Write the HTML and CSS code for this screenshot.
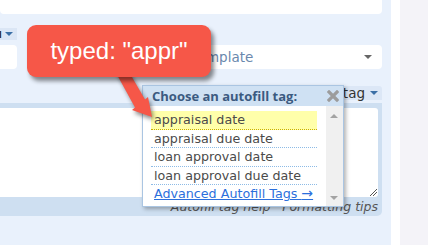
FILE: index.html
```html
<!DOCTYPE html>
<html lang="en">
<head>
  <meta charset="UTF-8" />
  <title>Autofill tag picker</title>
  <link rel="stylesheet" href="styles.css">
</head>
<body>
  <div class="screen">
    <div class="panel">
      <div class="top-field"></div>
      <div class="fields">
        <div class="field">
          <div class="label">Menu <span class="caret"></span></div>
          <div class="input"></div>
        </div>
        <div class="field">
          <div class="label"></div>
          <div class="select">Choose a Template <span class="caret grey"></span></div>
        </div>
      </div>
      <div class="toolbar">
        <span class="tag-btn">Insert autofill tag <span class="caret"></span></span>
      </div>
      <div class="editor">
        <div class="textarea"><span class="grip"></span></div>
        <div class="editor-foot">Autofill tag help · Formatting tips</div>
      </div>
    </div>
    <div class="gutter"></div>
    <div class="sidebar"></div>

    <!-- autofill popup -->
    <div class="popup">
      <div class="popup-head">
        Choose an autofill tag:
        <svg class="close" width="12" height="12" viewBox="0 0 12 12">
          <path d="M2 2 L10 10 M10 2 L2 10" stroke="#9c9c9c" stroke-width="3.2" stroke-linecap="square"/>
        </svg>
      </div>
      <div class="popup-body">
        <ul class="tag-list">
          <li class="active">appraisal date</li>
          <li>appraisal due date</li>
          <li>loan approval date</li>
          <li>loan approval due date</li>
          <li class="more"><a href="#">Advanced Autofill Tags <span class="go">→</span></a></li>
        </ul>
        <div class="scrollbar">
          <span class="arrow up"></span>
          <span class="arrow down"></span>
        </div>
      </div>
    </div>

    <svg class="pointer" width="428" height="245" viewBox="0 0 428 245">
      <polygon points="125,65 145,99.6 148,97 152,117 132,110 135,107.4 115,71" fill="#f65748"/>
    </svg>
    <div class="callout">typed: "appr"</div>
  </div>
</body>
</html>
```

FILE: styles.css
```css
body {
  margin: 0;
  font-family: 'DejaVu Sans', sans-serif;
  color: #444;
}
.screen {
  position: relative;
  display: flex;
  width: 428px;
  height: 245px;
  overflow: hidden;
}
.panel {
  width: 391px;
  padding-right: 9px;
  box-sizing: border-box;
  background-color: #e9f1fc;
}
.gutter {
  width: 9px;
  background-color: #fff;
}
.sidebar {
  flex: 1;
  background-color: #f4f3f8;
}
.top-field {
  height: 14px;
  background-color: #fff;
  border-radius: 0 0 4px 4px;
}
.fields {
  display: grid;
  grid-template-columns: 17px 1fr;
  gap: 12px;
  margin-top: 14px;
}
.label {
  display: flex;
  justify-content: flex-end;
  align-items: center;
  gap: 3px;
  height: 12px;
  padding-right: 4px;
  overflow: hidden;
  white-space: nowrap;
  font-size: 12px;
  font-weight: 600;
  color: #333;
}
.field:first-child .label {
  background-color: #dbe6f5;
}
.input, .select {
  height: 24px;
  margin-top: 5px;
  background-color: #fff;
  border-radius: 0 4px 4px 0;
}
.select {
  display: flex;
  align-items: center;
  justify-content: space-between;
  padding: 0 10px 0 96px;
  border-radius: 4px;
  font-size: 13.5px;
  color: #6a88ad;
}
.caret {
  display: inline-block;
  width: 0;
  height: 0;
  border-left: 4px solid transparent;
  border-right: 4px solid transparent;
  border-top: 4px solid #3b6fa6;
}
.caret.grey {
  border-top-color: #666;
}
.toolbar {
  display: flex;
  justify-content: flex-end;
  margin-top: 17px;
}
.tag-btn {
  display: flex;
  align-items: center;
  gap: 5px;
  height: 14px;
  padding: 0 4px;
  background-color: #dce7f6;
  border-radius: 3px 3px 0 0;
  font-size: 13.5px;
  color: #333;
}
.editor {
  margin-top: 3px;
  padding: 5px 4px 0 0;
  background-color: #cedff1;
  border-radius: 0 0 5px 0;
}
.textarea {
  position: relative;
  height: 89px;
  background-color: #fff;
  border-radius: 0 3px 3px 0;
}
.grip {
  position: absolute;
  right: 1px;
  bottom: 1px;
  width: 7px;
  height: 7px;
  background: linear-gradient(135deg, transparent 45%, #555 45%, #555 52%, transparent 52%, transparent 70%, #555 70%, #555 77%, transparent 77%);
}
.editor-foot {
  height: 19px;
  line-height: 19px;
  text-align: right;
  font-size: 12.5px;
  font-style: italic;
  color: #555;
}

/* popup */
.popup {
  position: absolute;
  left: 142px;
  top: 85px;
  width: 202px;
  height: 122px;
  box-sizing: border-box;
  border: 1px solid #aac5e2;
  background-color: #fff;
  box-shadow: 2px 2px 4px rgba(0, 0, 0, 0.3);
}
.popup-head {
  display: flex;
  justify-content: space-between;
  align-items: center;
  height: 20px;
  padding: 0 4px 0 9px;
  background-color: #cfe1f3;
  font-family: 'Open Sans', sans-serif;
  font-size: 13px;
  font-weight: 700;
  color: #3b5a80;
}
.popup-body {
  display: flex;
  height: 100px;
}
.tag-list {
  flex: 1;
  min-width: 0;
  list-style: none;
  margin: 0;
  padding: 5px 9px 0 8px;
}
.tag-list li {
  height: 17.5px;
  line-height: 17.5px;
  padding-left: 3px;
  border-bottom: 1px dotted #8dbbe6;
  font-size: 12.7px;
  color: #4a4a4a;
  white-space: nowrap;
}
.tag-list li.active {
  background-color: #ffffaa;
  border-bottom-color: #c9b000;
}
.tag-list li.more {
  border-bottom: none;
}
.tag-list a {
  color: #2b6fdc;
}
.go {
  font-size: 14px;
}
.scrollbar {
  position: relative;
  flex-shrink: 0;
  width: 17px;
  background-color: #f0f0f0;
}
.arrow {
  position: absolute;
  left: 4px;
  width: 0;
  height: 0;
  border-left: 4px solid transparent;
  border-right: 4px solid transparent;
}
.arrow.up {
  top: 8px;
  border-bottom: 4px solid #a3a3a3;
}
.arrow.down {
  bottom: 6px;
  border-top: 4px solid #a3a3a3;
}

/* annotation */
.pointer {
  position: absolute;
  left: 0;
  top: 0;
  filter: drop-shadow(2px 3px 2px rgba(0, 0, 0, 0.45));
}
.callout {
  position: absolute;
  left: 27px;
  top: 25px;
  width: 184px;
  height: 52px;
  border-radius: 9px;
  background-color: #f65748;
  box-shadow: 3px 4px 4px rgba(0, 0, 0, 0.45);
  font-family: 'Liberation Sans', Arial, sans-serif;
  font-size: 24px;
  line-height: 52px;
  text-align: center;
  color: #fff;
}
```
